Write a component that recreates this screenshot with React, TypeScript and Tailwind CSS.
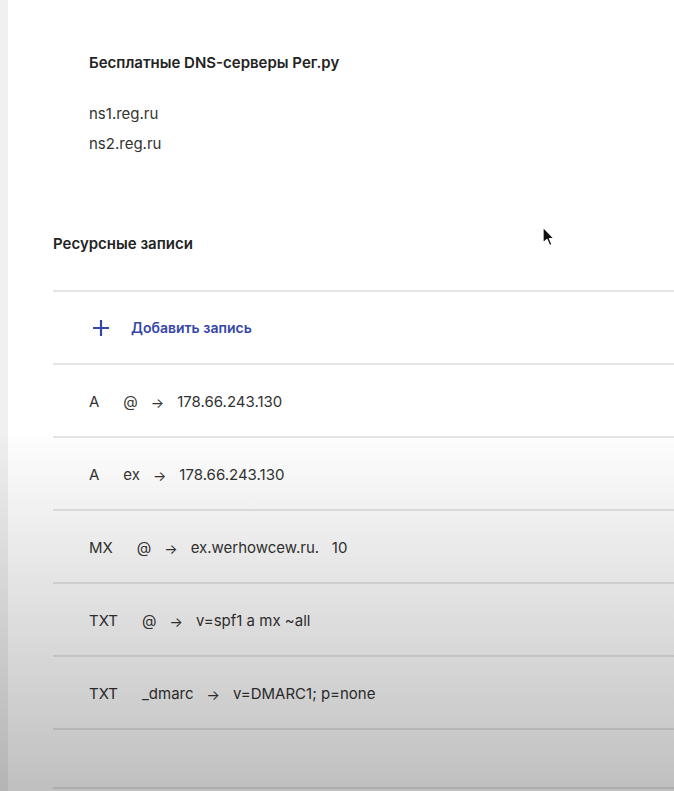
type DnsRecord = {
  type: string;
  name: string;
  value: string;
};

const records: DnsRecord[] = [
  { type: "A", name: "@", value: "178.66.243.130" },
  { type: "A", name: "ex", value: "178.66.243.130" },
  { type: "MX", name: "@", value: "ex.werhowcew.ru.\u00a0\u00a0 10" },
  { type: "TXT", name: "@", value: "v=spf1 a mx ~all" },
  { type: "TXT", name: "_dmarc", value: "v=DMARC1; p=none" },
];

function Cursor() {
  return (
    <svg
      className="pointer-events-none absolute left-[541px] top-[226px]"
      width="14"
      height="22"
      viewBox="0 0 14 22"
    >
      <path
        d="M2 1 L2 17 L6 13.5 L8.6 19.5 L11 18.5 L8.5 12.6 L13 12.6 Z"
        fill="#111"
        stroke="#fff"
        strokeWidth="1.3"
        strokeLinejoin="round"
      />
    </svg>
  );
}

export default function App() {
  return (
    <div
      className="relative flex min-h-[791px] w-full overflow-hidden text-[#232323]"
      style={{ fontFamily: "Inter, 'Noto Sans', sans-serif" }}
    >
      <div className="w-[8px] shrink-0 bg-[#eef0f2]" />
      <main className="flex-1 bg-white pl-[45px] pt-[53px]">
        <section className="pl-[36px]">
          <h2 className="text-[15px] font-semibold leading-5">
            Бесплатные DNS-серверы Рег.ру
          </h2>
          <p className="mt-[31px] text-[15px] leading-5 text-[#333]">
            ns1.reg.ru
          </p>
          <p className="mt-[10px] text-[15px] leading-5 text-[#333]">
            ns2.reg.ru
          </p>
        </section>

        <h2 className="mt-[80px] text-[15px] font-semibold leading-5">
          Ресурсные записи
        </h2>

        <div className="mt-[36px] border-t-2 border-[#e6e6e6]">
          <div className="flex h-[73px] items-center gap-[21px] border-b-2 border-[#e6e6e6] pl-[39px]">
            <svg width="18" height="18" viewBox="0 0 18 18" className="text-[#3447a8]">
              <path d="M9 1v16M1 9h16" stroke="currentColor" strokeWidth="2.2" />
            </svg>
            <span className="text-[14px] font-semibold text-[#3447a8]">
              Добавить запись
            </span>
          </div>
          {records.map((r, i) => (
            <div
              key={i}
              className="flex h-[73px] items-center border-b-2 border-[#e6e6e6] pl-[36px] pt-[4px] text-[15px] text-[#333]"
            >
              <span>{r.type}</span>
              <span className="ml-[24px]">{r.name}</span>
              <span className="ml-[13px] text-[14px]">→</span>
              <span className="ml-[13px]">{r.value}</span>
            </div>
          ))}
          <div className="h-[59px] border-b-2 border-[#e6e6e6]" />
        </div>
      </main>

      {/* video vignette */}
      <div className="pointer-events-none absolute inset-0 bg-linear-to-b from-transparent from-[54%] to-black/25" />
      <Cursor />
    </div>
  );
}
